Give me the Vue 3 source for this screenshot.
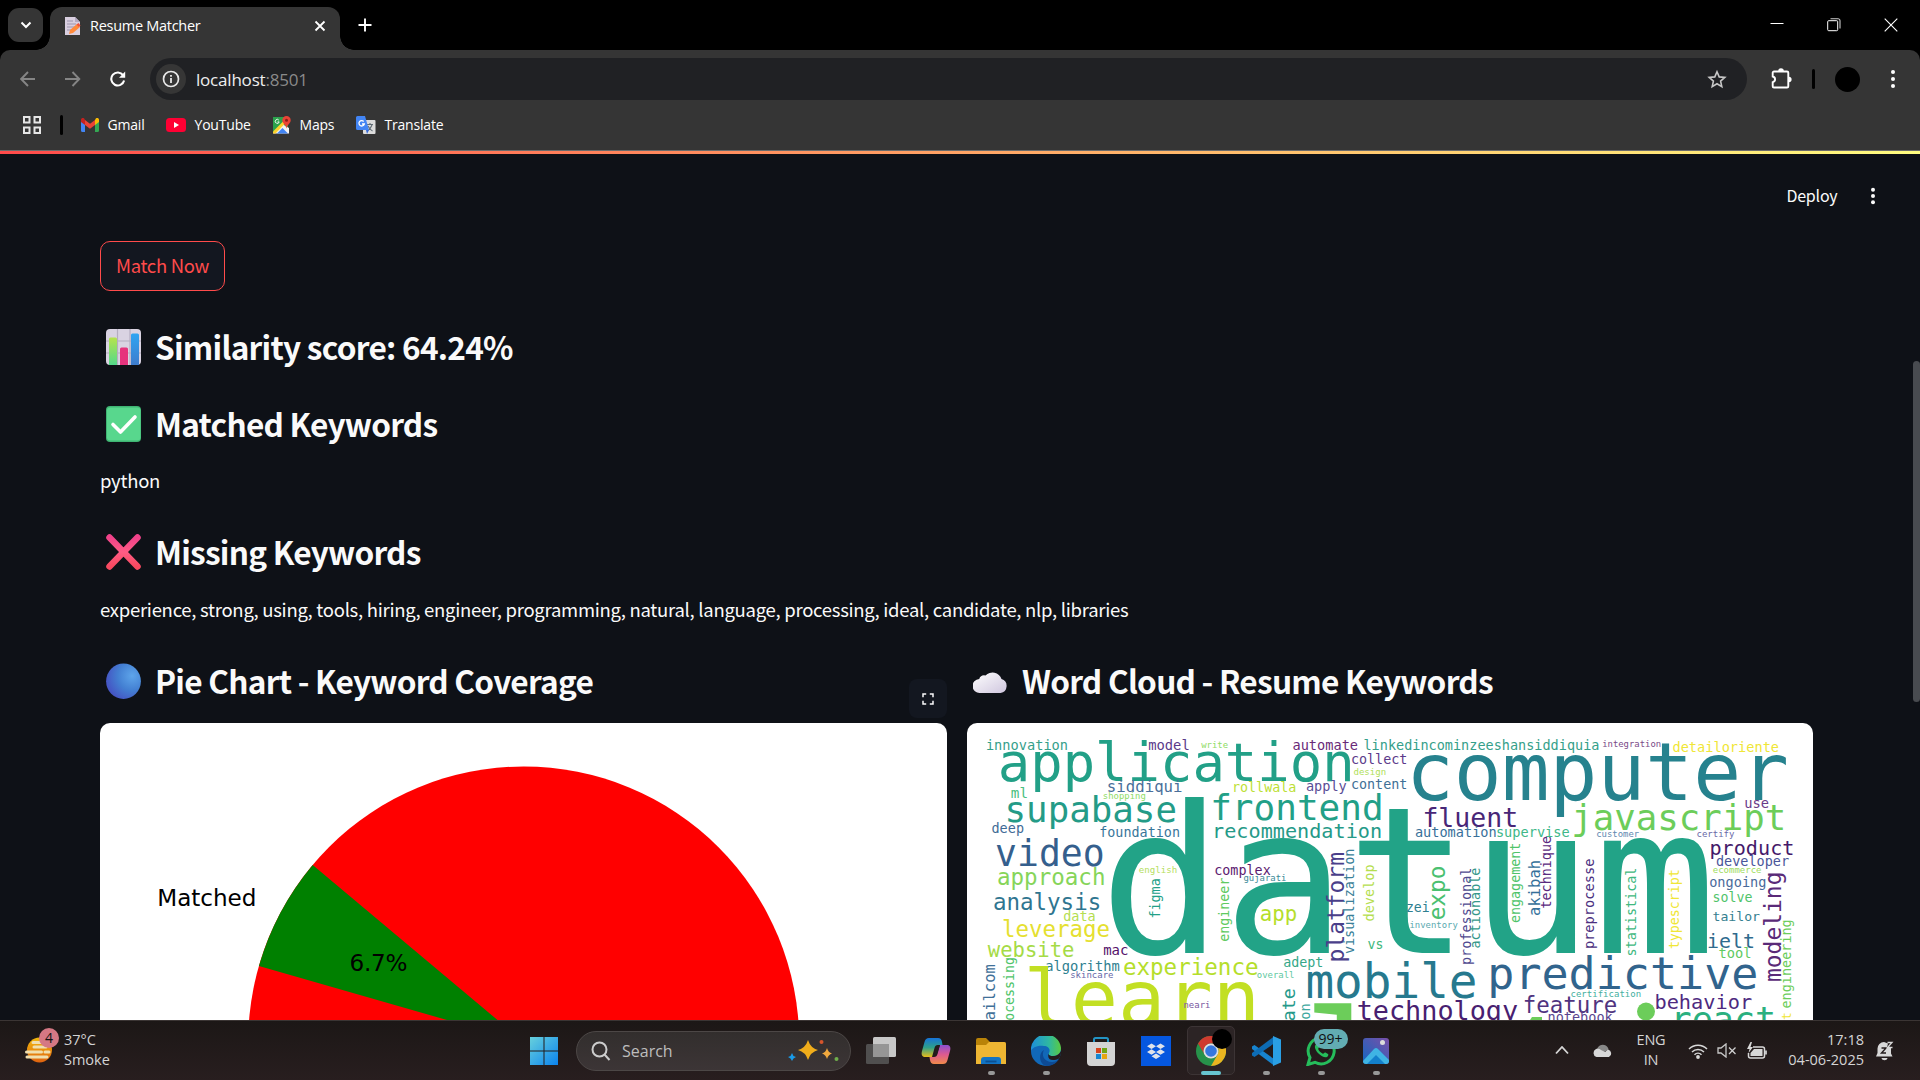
<script setup>
const horizontal = [
  ['datum', 1111.7, 1705.7, 952.7, '#22a387'],
  ['innovation', 986.7, 1067.3, 749.3, '#35a08a'],
  ['model', 1149, 1189, 749.3, '#5b3a8a'],
  ['write', 1201.7, 1227.7, 747.7, '#8fdc65'],
  ['automate', 1293.3, 1357.3, 749.3, '#6a2a78'],
  ['linkedincominzeeshansiddiquia', 1364.3, 1598.7, 749.3, '#35a08a'],
  ['integration', 1602.7, 1660.7, 746.3, '#7a4a88'],
  ['detailoriente', 1673.3, 1778.3, 751.3, '#f0e636'],
  ['application', 1001, 1351.7, 780.3, '#22a087'],
  ['collect', 1351.7, 1406.7, 763.3, '#5b3a8a'],
  ['design', 1354, 1385.7, 774, '#b0e05a'],
  ['computer', 1410.7, 1784.7, 799.3, '#26828e'],
  ['siddiqui', 1107.7, 1181.7, 791.3, '#4a6f9a'],
  ['rollwala', 1232.7, 1295.7, 791.3, '#bddf36'],
  ['apply', 1306.7, 1346, 790.3, '#5a4d96'],
  ['content', 1351.7, 1406.7, 788.7, '#407096'],
  ['ml', 1011.7, 1027.3, 797, '#4ac080'],
  ['shopping', 1103.3, 1145.3, 798.3, '#8fdc65'],
  ['supabase', 1006.7, 1175, 821.3, '#249b87'],
  ['frontend', 1212.3, 1381.7, 819.3, '#22a087'],
  ['deep', 992.3, 1023.3, 832, '#3f6b96'],
  ['foundation', 1100, 1179.3, 836, '#38769a'],
  ['recommendation', 1213.3, 1381, 837, '#259a88'],
  ['fluent', 1424, 1516.7, 826, '#482677'],
  ['javascript', 1573.3, 1784.3, 829, '#6ccd5a'],
  ['use', 1745, 1768.3, 807.3, '#6a3a8a'],
  ['automation', 1415.7, 1496, 836, '#38709a'],
  ['supervise', 1496.7, 1569, 836, '#40b888'],
  ['customer', 1596.7, 1638.7, 836, '#6088b0'],
  ['certify', 1697, 1734, 836, '#6a6aa8'],
  ['product', 1710.7, 1793.3, 854.3, '#451a6a'],
  ['developer', 1716.7, 1788.3, 865.7, '#4a569a'],
  ['video', 997.3, 1102.7, 865.3, '#355f8d'],
  ['approach', 998.3, 1104.3, 884.7, '#86d559'],
  ['english', 1139.3, 1176.7, 872, '#b5de60'],
  ['complex', 1215, 1270, 874.3, '#5c1a70'],
  ['gujarati', 1244, 1286, 880.7, '#3c8a98'],
  ['analysis', 994.3, 1100, 909, '#2f7590'],
  ['data', 1064, 1095, 920.3, '#b5de50'],
  ['leverage', 1003.3, 1108.7, 936, '#e5e030'],
  ['app', 1261, 1296, 920, '#b5de2b'],
  ['website', 989, 1073.3, 956.7, '#a5db46'],
  ['mac', 1104, 1127.7, 954, '#55126a'],
  ['algorithm', 1046, 1119, 970.7, '#2f8090'],
  ['skincare', 1070.7, 1113, 977.3, '#6868a8'],
  ['experience', 1124.3, 1257.3, 974.3, '#b5de2b'],
  ['overall', 1257.3, 1294, 977.3, '#60c8a0'],
  ['adept', 1284, 1322.7, 966.3, '#35a888'],
  ['vs', 1368.3, 1382.7, 948.7, '#40b87a'],
  ['learn', 1028.3, 1255.7, 1025, '#c2df23'],
  ['mobile', 1308.3, 1475, 997, '#26798e'],
  ['neari', 1184, 1210, 1007.7, '#7a58a0'],
  ['zei', 1406.7, 1429, 911.7, '#2f7f90'],
  ['inventory', 1410, 1457.3, 927, '#5aaab0'],
  ['technology', 1358.3, 1516.7, 1019, '#482070'],
  ['predictive', 1490, 1756, 988.7, '#31648d'],
  ['certification', 1571, 1640.7, 996, '#45b0a0'],
  ['feature', 1524, 1616, 1012.3, '#50347f'],
  ['notebook', 1548.3, 1612, 1021.3, '#5a4590'],
  ['behavior', 1655.7, 1751, 1008.3, '#4e2a80'],
  ['react', 1672.7, 1774.3, 1031, '#2ab07f'],
  ['ongoing', 1710, 1765.7, 886.7, '#4a6a9a'],
  ['ecommerce', 1713.3, 1761, 872, '#a0dc60'],
  ['solve', 1713.3, 1751.7, 901, '#50c46a'],
  ['tailor', 1713.3, 1759.3, 920, '#358090'],
  ['ielt', 1708.3, 1754, 947, '#2f6b8e'],
  ['tool', 1719.3, 1750.7, 957, '#60ca60'],
]
// text, lower end, upper end, baseline x, colour
const vertical = [
  ['platform', 961, 853.3, 1343.3, '#4a3f8a'],
  ['visualization', 953.3, 849.3, 1354, '#3a7f98'],
  ['develop', 920.7, 865, 1374, '#b5de50'],
  ['expo', 919, 866.7, 1444.3, '#4ac070'],
  ['professional', 964.3, 868.3, 1471, '#4f4a90'],
  ['actionable', 947.7, 868.3, 1480, '#35988a'],
  ['engagement', 922.3, 843.3, 1519.3, '#4fc46a'],
  ['akibah', 915, 860.7, 1539.3, '#35709a'],
  ['technique', 907.7, 836.7, 1550.7, '#5a2a80'],
  ['preprocesse', 948.3, 859.3, 1593.7, '#4b2f80'],
  ['statistical', 955.7, 868.3, 1636, '#40b880'],
  ['typescript', 948.3, 870, 1679, '#f0e636'],
  ['modeling', 980.7, 872.7, 1781, '#5a2a78'],
  ['engineering', 1007.7, 920, 1791, '#6ccd5a'],
  ['engineer', 941, 878.3, 1228.3, '#60ca60'],
  ['figma', 917.7, 879, 1160, '#22a087'],
  ['gmailcom', 1038, 965, 995, '#3f7098'],
  ['processing', 1036, 957.7, 1013.3, '#4fc46a'],
  ['create', 1053, 989.3, 1295, '#26998a'],
  ['question', 1068, 1004, 1310, '#3fa8a0'],
  ['present', 1066, 1013, 1791, '#f0e636'],
]
function fit(text, span) {
  const pitch = span / (text.length - 0.19)
  return { pitch, size: pitch / 0.602, length: pitch * text.length }
}
const words = [
  ...horizontal.map(([text, l, r, y, fill]) => {
    const f = fit(text, r - l)
    return { text, fill, size: f.size, length: f.length, at: `translate(${l - f.pitch * 0.1} ${y + 0.6})` }
  }),
  ...vertical.map(([text, b, t, x, fill]) => {
    const f = fit(text, b - t)
    return { text, fill, size: f.size, length: f.length, at: `translate(${x + 0.4} ${b + f.pitch * 0.1}) rotate(-90)` }
  }),
]
</script>

<template>
  <div class="screen">
    <header class="chrome">
      <div class="tabs">
        <div class="tabsearch"><svg width="14" height="14" viewBox="0 0 14 14"><path d="M2.500 4.500L7 9l4.500-4.500" fill="none" stroke="#fff" stroke-width="2"/></svg></div>
        <div class="tab">
          <svg class="fav" width="16" height="18" viewBox="0 0 16 18"><path d="M0 0h10l5 5v13H0z" fill="#d9cfe0"/><path d="M10 0v5h5" fill="#b5a9c2"/><path d="M2 4h6M2 7h9M2 10h8M2 13h5" stroke="#9d94ad"/><path d="M4 17l1-4 7-6 3 3-7 6z" fill="#ff8a3c"/><path d="M11.500 7.500l2-1.500 2 2.500-1.500 1.500z" fill="#f0503c"/></svg>
          <span class="tabtitle">Resume Matcher</span>
          <svg class="tabclose" width="12" height="12" viewBox="0 0 12 12"><path d="M1.500 1.500l9 9M10.500 1.500l-9 9" stroke="#fff" stroke-width="1.800"/></svg>
        </div>
        <svg class="plus" width="14" height="14" viewBox="0 0 14 14"><path d="M7 .5v13M.5 7h13" stroke="#fff" stroke-width="1.900"/></svg>
        <div class="wincontrols">
          <svg width="14" height="14" viewBox="0 0 14 14"><path d="M.5 5.500h13" stroke="#fff"/></svg>
          <svg width="14" height="14" viewBox="0 0 14 14"><rect x=".7" y="2.700" width="10" height="10" rx="1" fill="none" stroke="#fff"/><path d="M3.500.8H11a2 2 0 0 1 2 2V10.500" fill="none" stroke="#ccc" stroke-width="1.100"/></svg>
          <svg width="14" height="14" viewBox="0 0 14 14"><path d="M.7.700l12.600 12.600M13.300.7L.7 13.300" stroke="#fff" stroke-width="1.100"/></svg>
        </div>
      </div>
      <div class="toolbar">
        <div class="nav">
          <svg width="16" height="16" viewBox="0 0 16 16"><path d="M15 8H1.500M8 1L1.200 8 8 15" fill="none" stroke="#858585" stroke-width="1.900"/></svg>
          <svg width="16" height="16" viewBox="0 0 16 16"><path d="M0 8h14M7.500 1l6.800 7-6.800 7" fill="none" stroke="#858585" stroke-width="1.900"/></svg>
          <svg width="16" height="16" viewBox="0 0 16 16"><path d="M13.100 4.200A6.500 6.500 0 1 0 14.100 9.500" fill="none" stroke="#fff" stroke-width="2.100"/><path d="M15.200.5v6.200H9z" fill="#fff"/></svg>
        </div>
        <div class="url">
          <span class="info"><svg width="18" height="18" viewBox="0 0 18 18"><circle cx="9" cy="9" r="7.500" fill="none" stroke="#e8e8e8" stroke-width="1.700"/><path d="M9 8v5M9 5v1.700" stroke="#e8e8e8" stroke-width="1.800"/></svg></span>
          <span class="address">localhost<i>:8501</i></span>
          <svg class="star" width="20" height="20" viewBox="0 0 20 20"><path d="M10 2.800l2.200 5.100 5.600.5-4.200 3.700 1.200 5.500-4.800-2.900-4.800 2.900 1.200-5.500L2.200 8.400l5.600-.5z" fill="none" stroke="#c7c7c7" stroke-width="1.600"/></svg>
        </div>
        <svg class="ext" width="24" height="24" viewBox="0 0 24 24"><path d="M4 4.500h13a1.300 1.300 0 0 1 1.300 1.300v13.400a1.300 1.300 0 0 1-1.300 1.300H4a1.300 1.300 0 0 1-1.300-1.300v-4a2.900 2.900 0 0 0 0-5.700V5.800A1.300 1.300 0 0 1 4 4.500z" fill="none" stroke="#fff" stroke-width="1.900"/><path d="M8.200 4a2.800 2.800 0 0 1 5.600 0zM18.800 9.700a2.800 2.800 0 0 1 0 5.600z" fill="#fff"/></svg>
        <span class="sep tsep"></span>
        <span class="avatar"></span>
        <svg class="kebab" width="6" height="20" viewBox="0 0 6 20"><g fill="#fff"><circle cx="3" cy="3" r="2"/><circle cx="3" cy="10" r="2"/><circle cx="3" cy="17" r="2"/></g></svg>
      </div>
      <div class="bookmarks">
        <svg class="apps" width="18" height="18" viewBox="0 0 18 18"><g fill="none" stroke="#e6e6e6" stroke-width="2"><rect x="1" y="1" width="5.500" height="5.500"/><rect x="11.500" y="1" width="5.500" height="5.500"/><rect x="1" y="11.500" width="5.500" height="5.500"/><rect x="11.500" y="11.500" width="5.500" height="5.500"/></g></svg>
        <span class="sep bsep"></span>
        <div class="bm b1"><svg width="18" height="14" viewBox="0 0 18 14"><path d="M0 3v9.500A1.500 1.500 0 0 0 1.500 14H4V6z" fill="#4285f4"/><path d="M18 3v9.500a1.500 1.500 0 0 1-1.500 1.500H14V6z" fill="#34a853"/><path d="M14 2v5l4-3V2c0-2-2-2.500-3.200-1.500z" fill="#fbbc04"/><path d="M4 2v5l5 3.700L14 7V2L9 5.700z" fill="#ea4335"/><path d="M0 2v2l4 3V2L3.200.500C2-.5 0 0 0 2z" fill="#c5221f"/></svg><span>Gmail</span></div>
        <div class="bm b2"><svg width="20" height="14" viewBox="0 0 20 14"><rect width="20" height="14" rx="3.500" fill="#ff0033"/><path d="M8 4l5 3-5 3z" fill="#fff"/></svg><span>YouTube</span></div>
        <div class="bm b3"><svg width="18" height="18" viewBox="0 0 18 18"><path d="M0 1h15v16H0z" fill="#2ba24c"/><path d="M0 17.500L9 8l7 4v5.500z" fill="#f3f3f3"/><path d="M0 15.500L11.500 4l2 2L2.500 17.500H0z" fill="#fdd22e"/><path d="M4 17.500l5.500-5.500 5.500 5.500z" fill="#4285f4"/><path d="M13.500 0a4.200 4.200 0 0 1 4.200 4.200c0 3-3.200 4-4.200 8.300-1-4.300-4.200-5.300-4.200-8.300A4.200 4.200 0 0 1 13.500 0z" fill="#ea4335"/><circle cx="13.500" cy="4.200" r="1.500" fill="#8c1d18"/><path d="M5.800 4.100a2 2 0 1 0 .4 1.800H4.500" fill="none" stroke="#fff" stroke-width=".9"/></svg><span>Maps</span></div>
        <div class="bm b4"><svg width="20" height="20" viewBox="0 0 20 20"><rect x="7" y="5" width="12.500" height="14" rx="1" fill="#dcdcdc"/><path d="M11 9.500h6M14 8v1.500M16 10c-1 3-3 5-5 6M12 11c1 2 2.500 4 4.500 5" fill="none" stroke="#5f6b73" stroke-width="1.100"/><path d="M1.500 1H9l4 14H1.500A1.500 1.500 0 0 1 0 13.500v-11A1.500 1.500 0 0 1 1.500 1z" fill="#4285f4"/><path d="M10 15h3l-2 4z" fill="#3367d6"/><path d="M7.700 6.500A2.700 2.700 0 1 0 8.300 9H6" fill="none" stroke="#fff" stroke-width="1.300"/></svg><span>Translate</span></div>
      </div>
    </header>

    <main class="page">
      <div class="rainbow"></div>
      <div class="apphead">
        <span>Deploy</span>
        <svg width="6" height="18" viewBox="0 0 6 18"><g fill="#fafafa"><circle cx="3" cy="2.700" r="2"/><circle cx="3" cy="9" r="2"/><circle cx="3" cy="15.300" r="2"/></g></svg>
      </div>
      <div class="content">
        <button class="match">Match Now</button>
        <h3 class="h1"><svg width="35" height="36" viewBox="0 0 35 36"><defs><linearGradient id="g1" x2="0" y2="1"><stop stop-color="#b6e34d"/><stop offset="1" stop-color="#53d98a"/></linearGradient><linearGradient id="g2" x2="0" y2="1"><stop stop-color="#2ea5f2"/><stop offset="1" stop-color="#3f7ccd"/></linearGradient></defs><rect width="35" height="36" rx="4" fill="#d9d3e2"/><path d="M11.500 0v36M24 0v36M0 12h35M0 24h35" stroke="#b5adc0" stroke-width="1.200"/><path d="M3 10q0-1.500 1.500-1.500h5Q11 8.500 11 10v26H3z" fill="url(#g1)"/><path d="M14 20q0-1.500 1.500-1.500h5Q22 18.500 22 20v16h-8z" fill="#e6337d"/><path d="M25 6q0-1.500 1.500-1.500h5Q33 4.500 33 6v30h-8z" fill="url(#g2)"/></svg><span>Similarity score: 64.24%</span></h3>
        <h3 class="h2"><svg width="35" height="36" viewBox="0 0 35 36"><rect width="35" height="36" rx="4" fill="#3fb573"/><rect x="1" y="1.500" width="33.500" height="33" rx="3" fill="#58d78d"/><path d="M7 18.500l7.500 7.500L29 11" fill="none" stroke="#fff" stroke-width="3.600" stroke-linecap="round" stroke-linejoin="round"/></svg><span>Matched Keywords</span></h3>
        <p class="p1">python</p>
        <h3 class="h3"><svg width="35" height="36" viewBox="0 0 35 36"><defs><linearGradient id="g3" x1="0" y1="0" x2="0" y2="1"><stop stop-color="#f0428a"/><stop offset=".5" stop-color="#ff5c85"/><stop offset="1" stop-color="#f8495f"/></linearGradient></defs><path d="M3.500 3.500L31.500 32.500M31.500 3.500L3.500 32.500" stroke="url(#g3)" stroke-width="6.500" stroke-linecap="round"/></svg><span>Missing Keywords</span></h3>
        <p class="p2">experience, strong, using, tools, hiring, engineer, programming, natural, language, processing, ideal, candidate, nlp, libraries</p>
        <div class="columns">
          <section>
            <h3 class="h4"><svg width="35" height="36" viewBox="0 0 35 36"><defs><radialGradient id="g4" cx=".75" cy=".35" r=".75"><stop stop-color="#5ea5ea"/><stop offset=".55" stop-color="#437fd2"/><stop offset="1" stop-color="#4556c4"/></radialGradient></defs><ellipse cx="17.500" cy="18.200" rx="17.400" ry="17.700" fill="url(#g4)"/></svg><span>Pie Chart - Keyword Coverage</span></h3>
            <div class="card">
              <svg width="847" height="297" viewBox="100 723 847 297">
                <circle cx="523.7" cy="1042" r="275.5" fill="#f00"/>
                <path d="M523.7 1042L312.700 864.900A275.500 275.500 0 0 0 258.900 966.100z" fill="#008000"/>
                <text x="157.300" y="906.300" class="pielabel" textLength="99">Matched</text>
                <text x="349.500" y="971.300" class="pielabel" textLength="58">6.7%</text>
              </svg>
            </div>
            <div class="fullscreen"><svg width="12" height="12" viewBox="0 0 12 12"><path d="M1 4.200V1h3.200M7.800 1H11v3.200M11 7.800V11H7.800M4.200 11H1V7.800" fill="none" stroke="#fafafa" stroke-width="1.500"/></svg></div>
          </section>
          <section class="right">
            <h3 class="h4"><svg width="35" height="36" viewBox="0 0 35 36"><defs><linearGradient id="g5" x1="0" y1="0" x2="1" y2="1"><stop stop-color="#fff"/><stop offset="1" stop-color="#cfc6de"/></linearGradient></defs><path d="M7 30a7 7 0 0 1-.8-14 5.500 5.500 0 0 1 6.300-3.500A9.500 9.500 0 0 1 28.500 16a7.200 7.200 0 0 1-1 14z" fill="url(#g5)"/></svg><span>Word Cloud - Resume Keywords</span></h3>
            <div class="card">
              <svg width="846" height="297" viewBox="967 723 846 297">
                <text v-for="(w, i) in words" :key="i" class="word" :transform="w.at" :fill="w.fill" :font-size="w.size" :textLength="w.length">{{ w.text }}</text>
                <path d="M1314.300 1003.300h37V1020h-14.500v-5.200l-22.500-2.300z" fill="#6ccd5a"/>
                <circle cx="1646" cy="1011.500" r="9" fill="#6ccd5a"/>
                <path d="M1532 1017h10v3h-12z" fill="#6ccd5a"/>
              </svg>
            </div>
          </section>
        </div>
      </div>
      <div class="scrollbar"></div>
    </main>

    <footer class="taskbar">
      <div class="weather">
        <div class="smoke">
          <svg width="28" height="26" viewBox="0 0 28 26"><defs><linearGradient id="s" x2="0" y2="1"><stop stop-color="#f2b90c"/><stop offset="1" stop-color="#df6310"/></linearGradient></defs><circle cx="14.500" cy="13" r="12.500" fill="url(#s)"/><path d="M8 5.500h10M9 10h12M1.500 15h15M20 15h4M2 20h20" stroke="#f0dfae" stroke-width="3" stroke-linecap="round"/></svg>
          <span class="badge">4</span>
        </div>
        <div class="wtext"><span>37°C</span><span>Smoke</span></div>
      </div>
      <div class="cell"><svg width="30" height="30" viewBox="0 0 30 30"><defs><linearGradient id="w" x2="1" y2="1"><stop stop-color="#67d0dc"/><stop offset="1" stop-color="#0b83ee"/></linearGradient></defs><path d="M1 1h13.500v13.500H1zM15.500 1H29v13.500H15.500zM1 15.500h13.500V29H1zM15.500 15.500H29V29H15.500z" fill="url(#w)"/></svg></div>
      <div class="search">
        <svg width="20" height="20" viewBox="0 0 20 20"><circle cx="8.500" cy="8.500" r="7" fill="none" stroke="#ccc" stroke-width="2"/><path d="M13.500 13.500l5 5.500" stroke="#ccc" stroke-width="2"/></svg>
        <span>Search</span>
        <svg class="sparks" width="52" height="24" viewBox="0 0 52 24"><path d="M20 1q2.500 8 10 10-7.500 2-10 10-2.500-8-10-10 7.500-2 10-10z" fill="#f0ad1b"/><path d="M39 9q1.300 4.500 5 5.500-3.700 1-5 5.500-1.300-4.500-5-5.500 3.700-1 5-5.500z" fill="#f0a83e"/><path d="M4 14l1.500 3 2.500 1-2.500 1.500L4 22l-1.500-2.500L0 18l2.500-1z" fill="#1a9be8"/><circle cx="33.500" cy="3" r="2" fill="#d6552c"/><circle cx="48.500" cy="20" r="2" fill="#6fae4c"/></svg>
      </div>
      <div class="cell first"><svg width="30" height="28" viewBox="0 0 30 28"><rect x="7" y="0" width="23" height="20" rx="1.500" fill="#c8c8c8"/><rect x="0" y="7" width="23" height="20" rx="1.500" fill="#555" opacity=".9"/><path d="M7 7h16v13H7z" fill="#969696"/></svg></div>
      <div class="cell"><svg width="30" height="28" viewBox="0 0 30 28"><defs><linearGradient id="c1" x2="0" y2="1"><stop stop-color="#1673d8"/><stop offset=".5" stop-color="#2ea08a"/><stop offset="1" stop-color="#e8bd1a"/></linearGradient><linearGradient id="c2" x2="0" y2="1"><stop stop-color="#8c4fd0"/><stop offset=".5" stop-color="#dd5a90"/><stop offset="1" stop-color="#f08a4a"/></linearGradient></defs><path d="M8 1h9c2.500 0 3.500 1.500 4 4l.5 3H17c-2 0-3 1-3.500 3L11 20H4c-3 0-4-2.500-3-6l2.500-9C4.500 2 5.500 1 8 1z" fill="url(#c1)"/><path d="M22 27h-9c-2.500 0-3.500-1.500-4-4l-.5-3H13c2 0 3-1 3.500-3L19 8h7c3 0 4 2.500 3 6l-2.500 9c-1 3-2 4-4.500 4z" fill="url(#c2)"/><path d="M12 20l4-3 3-9-4 1z" fill="#241c1d"/></svg></div>
      <div class="cell run"><svg width="30" height="28" viewBox="0 0 30 28"><path d="M0 3a2 2 0 0 1 2-2h8l4 4h14a2 2 0 0 1 2 2v6H0z" fill="#b98308"/><path d="M0 8h10l3-3h15a2 2 0 0 1 2 2v20H0z" fill="#eeb633"/><path d="M5 27v-4a3 3 0 0 1 3-3h14a3 3 0 0 1 3 3v4z" fill="#1274c4"/><path d="M9.500 24.500h11" stroke="#0b4f91" stroke-width="1.800"/></svg></div>
      <div class="cell run"><svg width="30" height="30" viewBox="0 0 30 30"><defs><linearGradient id="e1" x2="1"><stop stop-color="#1c8edb"/><stop offset=".6" stop-color="#2fb8a0"/><stop offset="1" stop-color="#5acb42"/></linearGradient></defs><circle cx="15" cy="15" r="15" fill="#1168b8"/><path d="M0 15A15 15 0 0 1 30 12c0 5-3 8-8 8-3 0-5-1-4-3 2-4-1-7-5-7C6 9 1 12 0 15z" fill="url(#e1)"/><path d="M13 14c-3 5 0 12 8 12 3 0 5-1 7-3-2 4-7 7-12 7-8-1-9-13-3-16z" fill="#0d4a94"/><path d="M18 17c-1 2 1 3 4 3 4 0 6-1.500 8-5 .3 2-.5 5.500-2 7.500-2 1.300-4 1.500-6 1.500-4 0-6-3-4-7z" fill="#241c1d"/></svg></div>
      <div class="cell"><svg width="30" height="30" viewBox="0 0 30 30"><path d="M8 8V3.500A1.500 1.500 0 0 1 9.500 2h11A1.500 1.500 0 0 1 22 3.500V8" fill="none" stroke="#2394c4" stroke-width="2"/><path d="M1 6h28v20a4 4 0 0 1-4 4H5a4 4 0 0 1-4-4z" fill="#d4d4d4"/><path d="M10 12h5v5h-5z" fill="#d8431c"/><path d="M16 12h5v5h-5z" fill="#6fa615"/><path d="M10 18h5v5h-5z" fill="#1787d2"/><path d="M16 18h5v5h-5z" fill="#e6a512"/></svg></div>
      <div class="cell"><svg width="30" height="30" viewBox="0 0 30 30"><path d="M0 0h30v30H0z" fill="#0557df"/><path d="M10.500 7.500L15 10.300l-4.500 2.800L6 10.300zM19.500 7.500l4.500 2.800-4.500 2.800-4.500-2.800zM10.500 13.200L15 16l-4.500 2.800L6 16zM19.500 13.200L24 16l-4.500 2.800L15 16zM15 17.500l4.500 2.800L15 23l-4.500-2.700z" fill="#dfe3ea"/></svg></div>
      <div class="cell active">
        <svg width="30" height="30" viewBox="0 0 30 30"><circle cx="15" cy="15" r="15" fill="#27924a"/><path d="M2 7.500A15 15 0 0 1 28 7.500H15a7.500 7.500 0 0 0-6.500 11z" fill="#cf3a2e"/><path d="M28 7.500A15 15 0 0 1 15 30l6.500-11.300c2-4 1-8-2.500-11.200z" fill="#eab520"/><circle cx="15" cy="15" r="7.500" fill="#e0e0e0"/><circle cx="15" cy="15" r="5.800" fill="#3577dd"/></svg>
        <span class="profile"></span>
      </div>
      <div class="cell run"><svg width="30" height="30" viewBox="0 0 30 30"><path d="M1 10.500L3.500 9 23 23v6.500L1 13z" fill="#1784cf"/><path d="M1 19.500L3.500 21 23 7.500V.5L1 17z" fill="#0d6cb5"/><path d="M22 0l8 3.500v23L22 30z" fill="#2a9fe4"/></svg></div>
      <div class="cell run">
        <svg width="30" height="30" viewBox="0 0 30 30"><path d="M2 28.500l2-7A13 13 0 1 1 9 26.300z" fill="none" stroke="#25bd5b" stroke-width="3"/><path d="M10.500 8c-3 1.500-1.500 6 2 9.500s8 5 9.500 2.500c1-2 0-2-2.500-3.500-1.500-.5-1.500 1.500-2.700 1.200-2-.7-4-2.700-4.600-4.600-.3-1.100 1.600-1.600.9-2.900C12.300 8.500 12 7.500 10.500 8z" fill="#25bd5b"/></svg>
        <span class="count">99+</span>
      </div>
      <div class="cell run"><svg width="26" height="26" viewBox="0 0 26 26"><defs><linearGradient id="ph" x1="0" y1="1" x2="1" y2="0"><stop stop-color="#1267c0"/><stop offset="1" stop-color="#7b4fa8"/></linearGradient></defs><rect width="26" height="26" rx="3" fill="url(#ph)"/><path d="M0 23L11 11q2-2 4 0l11 11v1q0 3-3 3H3q-3 0-3-3z" fill="#3fb4e4"/><path d="M4 26l9-9 9 9z" fill="#1380cc"/><circle cx="19.500" cy="4.500" r="2.500" fill="#dcdcdc"/></svg></div>
      <div class="tray">
        <svg class="up" width="14" height="9" viewBox="0 0 14 9"><path d="M1 7.500L7 1l6 6.500" fill="none" stroke="#d6d6d6" stroke-width="1.800"/></svg>
        <svg class="cloud" width="21" height="14" viewBox="0 0 21 14"><path d="M5 5a6 6 0 0 1 10-2.500c1 1 1.500 2 1.500 3l-6 3.500z" fill="#888"/><path d="M4.500 13A4.300 4.300 0 0 1 4 5c2-.7 4 0 5 1l4 2 3-2.500a4 4 0 0 1 1 7.500z" fill="#d8d8d8"/></svg>
        <div class="lang"><span>ENG</span><span>IN</span></div>
        <svg class="wifi" width="20" height="16" viewBox="0 0 20 16"><g fill="none" stroke="#d8d8d8" stroke-width="1.500"><path d="M1 6a12.500 12.500 0 0 1 18 0M4 9a8.500 8.500 0 0 1 12 0M6.500 11.700a5 5 0 0 1 7 0"/></g><circle cx="10" cy="14" r="1.900" fill="#d8d8d8"/></svg>
        <svg class="vol" width="20" height="15" viewBox="0 0 20 15"><path d="M1 5h3l5-4v13L4 10H1z" fill="none" stroke="#c8c8c8" stroke-width="1.300"/><path d="M12 4.500l6.500 6.500M18.500 4.500L12 11" stroke="#d0d0d0" stroke-width="1.300"/></svg>
        <svg class="bat" width="20" height="18" viewBox="0 0 20 18"><path d="M6 5h9.500a2 2 0 0 1 2 2v7a2 2 0 0 1-2 2h-12a2 2 0 0 1-2-2v-3" fill="none" stroke="#d8d8d8" stroke-width="1.500"/><path d="M7 7h8.500v7h-12v-3z" fill="#d8d8d8"/><path d="M19 8.500v4" stroke="#d8d8d8" stroke-width="1.700"/><path d="M3.500 0L0 7h2.500L1.500 11 6 5H3.500L5 0z" fill="#d8d8d8"/></svg>
        <div class="clock"><span>17:18</span><span>04-06-2025</span></div>
        <svg class="bell" width="18" height="20" viewBox="0 0 18 20"><path d="M0 15.500L1.500 12V7.500A6.500 6.500 0 0 1 8 1l4 1.500-1 4h4v6l1.500 3zM5.500 17h6c-.5 3-5.500 3-6 0z" fill="#d8d8d8"/><path d="M5.500 7h4.500l-4.500 5h4.500" fill="none" stroke="#241c1d" stroke-width="1.400"/><path d="M11.500 1.500h4.500l-4.500 5h5" fill="none" stroke="#d8d8d8" stroke-width="1.300"/></svg>
      </div>
    </footer>
  </div>
</template>

<style>
body { margin: 0; background: #0e1117; overflow: hidden; }
</style>

<style scoped>
.screen { width: 1920px; height: 1080px; display: flex; flex-direction: column; overflow: hidden; font-family: "Open Sans", "Noto Sans", sans-serif; color: #fff; }
svg { display: block; flex: none; }
.chrome { height: 150px; background: #000; }
.tabs { height: 50px; display: flex; align-items: center; box-sizing: border-box; padding-left: 8px; }
.tabsearch { width: 35px; height: 34px; border-radius: 11px; background: #353535; display: flex; align-items: center; justify-content: center; }
.tab { position: relative; margin: 7px 0 0 7px; width: 290px; height: 43px; box-sizing: border-box; padding: 0 14px 6px 15px; background: #353535; border-radius: 12px 12px 0 0; display: flex; align-items: center; }
.tab::before, .tab::after { content: ""; position: absolute; bottom: 0; width: 14px; height: 14px; }
.tab::before { left: -14px; background: radial-gradient(circle at 0 0, transparent 13.500px, #353535 14px); }
.tab::after { right: -14px; background: radial-gradient(circle at 100% 0, transparent 13.500px, #353535 14px); }
.tabtitle { margin-left: 9px; font-size: 14.500px; letter-spacing: -.28px; flex: 1; white-space: nowrap; }
.plus { margin-left: 18px; }
.wincontrols { margin-left: auto; display: flex; gap: 43px; padding-right: 22px; }
.toolbar { height: 58px; background: #353535; border-radius: 10px 10px 0 0; display: flex; align-items: center; padding-left: 20px; }
.nav { display: flex; gap: 29px; width: 130px; }
.url { width: 1597px; height: 42px; border-radius: 21px; background: #202124; display: flex; align-items: center; box-sizing: border-box; padding: 0 20px 0 6px; }
.info { width: 30px; height: 30px; border-radius: 50%; background: #363636; display: flex; align-items: center; justify-content: center; }
.address { margin-left: 10px; flex: 1; font-size: 17px; letter-spacing: -.2px; color: #eee; }
.address i { font-style: normal; color: #8a8a8a; }
.ext { margin-left: 23px; }
.sep { width: 3px; height: 20px; border-radius: 2px; background: #000; }
.tsep { margin-left: 18px; }
.avatar { width: 25px; height: 25px; border-radius: 50%; background: #000; margin-left: 20px; }
.kebab { margin-left: 29.500px; }
.bookmarks { height: 42px; background: #353535; display: flex; align-items: center; box-sizing: border-box; padding: 0 0 8px 23px; font-size: 14px; }
.bsep { margin-left: 19px; }
.bm { display: flex; align-items: center; gap: 8.500px; white-space: nowrap; letter-spacing: -.2px; }
.bm span { margin-top: -2px; }
.b1 { margin-left: 18px; width: 85px; }
.b2 { width: 107px; }
.b3 { width: 83px; }
.page { position: relative; height: 870px; background: #0e1117; overflow: hidden; font-family: "Noto Sans CJK SC", "Source Sans Pro", sans-serif; color: #fafafa; }
.rainbow { height: 4px; border-top: 1px solid #6c6c6c; box-sizing: border-box; background: linear-gradient(90deg, #ff4b4b, #fffd80); }
.apphead { height: 84px; display: flex; align-items: center; justify-content: flex-end; gap: 32px; padding-right: 44.500px; font-size: 16px; letter-spacing: -.2px; }
.apphead span { margin-top: -2px; }
.content { padding: 3px 107px 0 100px; }
.match { display: block; width: 125px; height: 50px; box-sizing: border-box; border: 1px solid #ff4b4b; border-radius: 10px; background: #131720; color: #ff4b4b; font: 18.500px "Noto Sans CJK SC", sans-serif; letter-spacing: -.35px; padding: 0 0 2px; white-space: nowrap; }
h3 { margin: 0; height: 42px; padding-left: 6px; display: flex; align-items: center; gap: 14px; font-weight: 600; font-size: 31.600px; letter-spacing: -.74px; line-height: 42px; white-space: nowrap; }
h3 span { margin-top: -2.500px; }
.h1 { margin-top: 35px; }
.h2 { margin-top: 35px; }
p { margin: 0; height: 30px; line-height: 28px; font-size: 18.500px; letter-spacing: -.275px; white-space: nowrap; }
.p1 { margin-top: 21px; }
.h3 { margin-top: 35px; }
.p2 { margin-top: 22px; }
.columns { display: flex; gap: 20px; margin-top: 35px; }
.columns section { position: relative; width: 847px; flex: none; }
.columns .right { width: 846px; }
.card { margin-top: 20.500px; height: 297px; background: #fff; border-radius: 10px 10px 0 0; overflow: hidden; }
.pielabel { font: 23.100px "DejaVu Sans", sans-serif; fill: #000; }
.word { font-family: "DejaVu Sans Mono", monospace; }
.fullscreen { position: absolute; right: 0; top: 19px; width: 38px; height: 39px; border-radius: 8px; background: #131720; display: flex; align-items: center; justify-content: center; }
.scrollbar { position: absolute; right: 0; top: 211px; width: 7px; height: 341px; border-radius: 4px; background: #484b50; }
.taskbar { height: 60px; box-sizing: border-box; border-top: 1px solid #3b3534; background: linear-gradient(#1c1716, #281e1f); display: flex; align-items: center; color: #d4d4d4; }
.weather { width: 516.500px; box-sizing: border-box; padding-left: 25px; display: flex; align-items: center; }
.smoke { position: relative; width: 28px; margin-top: -2px; }
.badge { position: absolute; left: 14px; top: -9px; width: 20px; height: 20px; border-radius: 50%; background: #d57884; color: #111; font-size: 14px; line-height: 20px; text-align: center; }
.wtext { margin: -2px 0 0 11px; display: flex; flex-direction: column; font-size: 14.500px; line-height: 20px; }
.cell { position: relative; width: 55px; height: 60px; flex: none; display: flex; align-items: center; justify-content: center; }
.run::after, .active::after { content: ""; position: absolute; bottom: 6px; left: 24px; width: 7px; height: 4px; border-radius: 2px; background: #989898; }
.active::after { width: 20px; left: 17.500px; background: #67c5d0; }
.active::before { content: ""; position: absolute; left: 3px; top: 5px; width: 48px; height: 49px; border: 1px solid #3c3435; border-radius: 5px; background: #2c2425; box-sizing: border-box; }
.active svg { position: relative; }
.profile { position: absolute; left: 28px; top: 8px; width: 20px; height: 20px; border-radius: 50%; background: #000; }
.count { position: absolute; left: 20px; top: 8.500px; width: 34px; height: 20px; border-radius: 10px; background: #62acb2; color: #101010; font-size: 14px; line-height: 20px; text-align: center; }
.search { margin-left: 4.500px; width: 275px; height: 40px; box-sizing: border-box; border: 1px solid #4c4746; border-radius: 20px; background: linear-gradient(#322e2d, #3c3536); display: flex; align-items: center; padding: 0 10px 0 14px; font-size: 16px; color: #bdbdbd; }
.search span { margin-left: 11px; flex: 1; letter-spacing: 0; }
.first { margin-left: 2.500px; }
.tray { margin-left: auto; display: flex; align-items: center; padding-right: 26px; }
.cloud { margin-left: 23px; }
.lang { width: 34px; margin: -2px 0 0 21px; display: flex; flex-direction: column; align-items: center; font-size: 14.500px; line-height: 20px; letter-spacing: -.2px; }
.wifi { margin-left: 20px; }
.vol { margin-left: 9px; }
.bat { margin-left: 10px; }
.clock { width: 97px; margin-top: -2px; display: flex; flex-direction: column; align-items: flex-end; font-size: 14.500px; line-height: 20px; white-space: nowrap; }
.bell { margin-left: 12px; }
</style>
